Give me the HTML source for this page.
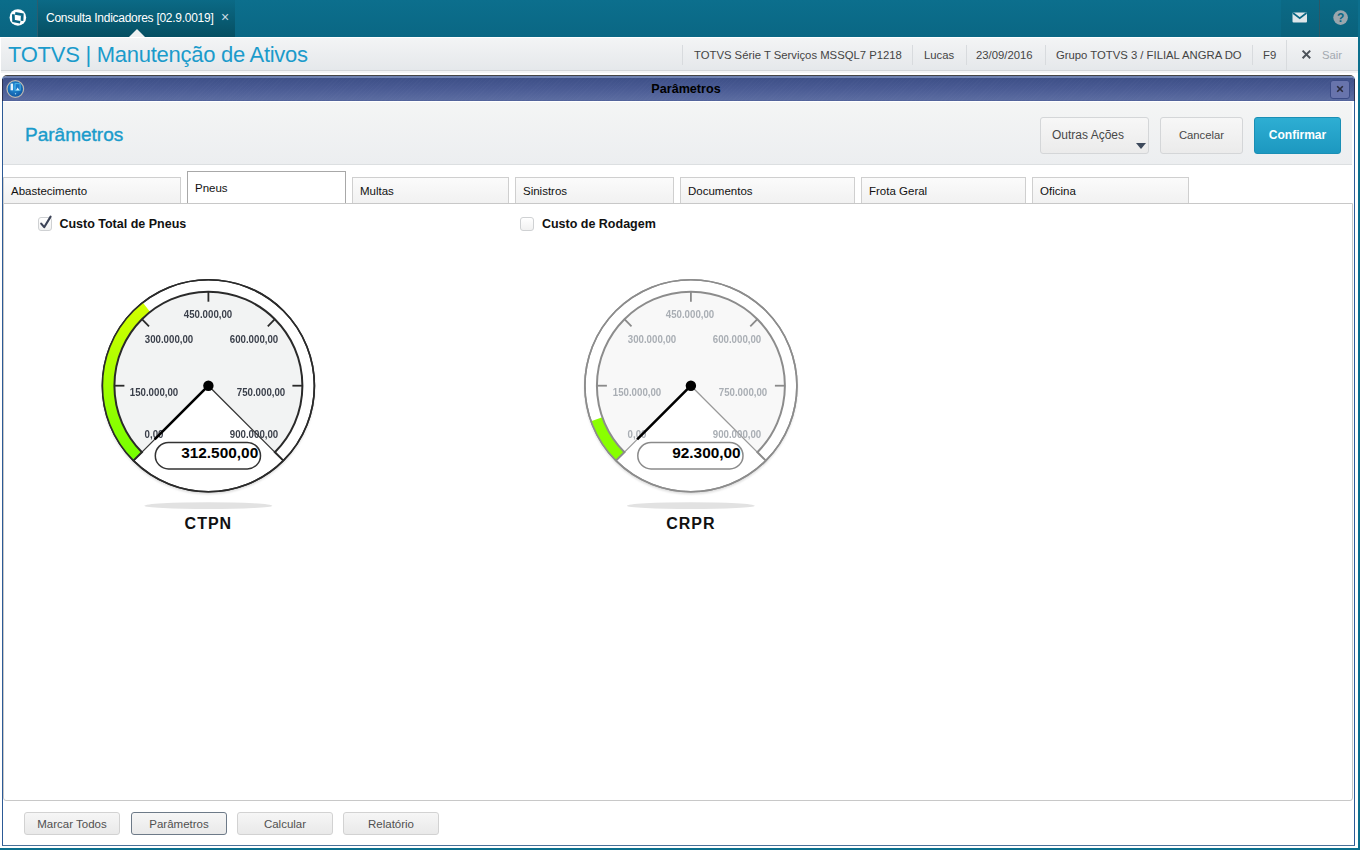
<!DOCTYPE html>
<html><head><meta charset="utf-8">
<style>
*{margin:0;padding:0;box-sizing:border-box}
html,body{width:1360px;height:850px;overflow:hidden;background:#fff;font-family:"Liberation Sans",sans-serif;position:relative}
.a{position:absolute}
#topbar{left:0;top:0;width:1360px;height:37px;background:linear-gradient(#0c6f8d,#0a6784)}
#logo{left:0;top:0;width:38px;height:37px;background:linear-gradient(#0b6d8a,#0a6480);border-right:1px solid #2b5e70}
#tab{left:38px;top:0;width:197px;height:37px;background:linear-gradient(#0b6a86,#064f62)}
#tabtxt{left:46px;top:11px;font-size:12px;letter-spacing:-0.27px;color:#fff;white-space:nowrap}
#tabx{left:221px;top:8.5px;font-size:14px;color:#c9dde3}
#notch{left:129px;top:29px;width:0;height:0;border-left:8px solid transparent;border-right:8px solid transparent;border-bottom:8px solid #eef0f1}
#mail{left:1281px;top:0;width:38px;height:37px;background:linear-gradient(#0b6a86,#0a617b)}
#help{left:1320px;top:0;width:38px;height:37px;background:linear-gradient(#0b6a86,#0a617b)}
#msep{left:1319px;top:0;width:1px;height:37px;background:#2d5866}
#rstrip{left:1358px;top:0;width:2px;height:850px;background:#0c6f8d}
#bstrip{left:0;top:848px;width:1360px;height:2px;background:#0c6f8d}
#hdr{left:1px;top:38px;width:1357px;height:33px;background:linear-gradient(#f3f4f5,#e5e8eb);border-bottom:1px solid #d3d6d9}
#hdrtitle{left:8px;top:42px;font-size:22px;letter-spacing:-0.27px;color:#1b9bcb;white-space:nowrap}
.hi{top:49px;font-size:11.3px;color:#444;white-space:nowrap}
.sep{top:45px;width:1px;height:20px;background:#d8dbde}
#dlg{left:2px;top:75px;width:1353px;height:771px;border:1px solid #2c5a96;border-top:1px solid #444;border-bottom-color:#4a7098;border-radius:5px 5px 0 0;background:#fff}
#title{left:3px;top:76px;width:1351px;height:25px;background:repeating-linear-gradient(135deg,rgba(255,255,255,0) 0 2px,rgba(255,255,255,0.015) 2px 3px),linear-gradient(#6d80b0 0,#6d80b0 1.5px,#3e5088 2.5px,#4b5c95 55%,#5b6ca0 96%,#4a5a95 100%);border-radius:4px 4px 0 0}
#titletxt{left:0;top:81.5px;width:1372px;text-align:center;font-size:12.6px;font-weight:bold;color:#000}
#dhead{left:3px;top:102px;width:1349px;height:63px;background:linear-gradient(#f4f5f5,#eceef0);border-bottom:1px solid #dcdfe1}
#dheadtitle{left:25px;top:124px;font-size:19px;color:#1a9bcb;-webkit-text-stroke:0.4px #1a9bcb}
.btn{height:37px;border:1px solid #d4d6d8;border-radius:3px;background:linear-gradient(#f7f7f7,#ebebeb);font-size:12px;color:#484848;text-align:center;line-height:35px}
#tabs .t{top:177px;height:27px;border:1px solid #cfcfcf;border-bottom:none;background:linear-gradient(#fbfbfb,#f1f1f1);font-size:11.5px;color:#111;padding-left:7px;line-height:27px}
#panel{left:3px;top:203px;width:1350px;height:598px;border:1px solid #c8c8c8;border-radius:0 0 3px 3px;background:#fff}
.bb{top:812px;height:23px;border:1px solid #d2d2d2;border-radius:3px;background:linear-gradient(#f6f6f6,#e9e9e9);font-size:11.5px;color:#505050;text-align:center;line-height:22px}
.gl{width:80px;text-align:center;font-size:11px;font-weight:bold;white-space:nowrap;line-height:12px;transform:scaleX(0.88)}
.vbox{width:106.4px;height:27.7px;border:1.3px solid #333;border-radius:14px;background:#fff}
.vtxt{top:444px;width:103.6px;text-align:right;font-size:15.4px;font-weight:bold;color:#000;line-height:18px}
.glab{top:514px;width:100px;text-align:center;font-size:16px;font-weight:bold;letter-spacing:1px;color:#111;line-height:20px}
.cb{width:14px;height:14px;border:1px solid #cfd1d3;border-radius:3px;background:linear-gradient(#fff,#f1f1f1)}
.cbl{top:217px;font-size:12.5px;font-weight:bold;color:#111;line-height:15px;white-space:nowrap}
</style></head><body>
<div class="a" id="topbar"></div>
<div class="a" id="logo"></div>
<div class="a" id="tab"></div>
<div class="a" id="tabtxt">Consulta Indicadores [02.9.0019]</div>
<div class="a" id="tabx">×</div>
<div class="a" id="notch"></div>
<div class="a" id="mail"></div>
<div class="a" id="help"></div>
<div class="a" id="msep"></div>
<div class="a" id="rstrip"></div>
<div class="a" id="bstrip"></div>

<div class="a" id="hdr"></div>
<div class="a" style="left:1px;top:71px;width:1357px;height:2px;background:#f2f3f4"></div>
<div class="a" id="hdrtitle">TOTVS | Manutenção de Ativos</div>
<div class="a sep" style="left:682px"></div>
<div class="a hi" style="left:694px">TOTVS Série T Serviços MSSQL7 P1218</div>
<div class="a sep" style="left:912px"></div>
<div class="a hi" style="left:924px">Lucas</div>
<div class="a sep" style="left:966px"></div>
<div class="a hi" style="left:976px">23/09/2016</div>
<div class="a sep" style="left:1045px"></div>
<div class="a hi" style="left:1056px">Grupo TOTVS 3 / FILIAL ANGRA DO</div>
<div class="a sep" style="left:1252px"></div>
<div class="a hi" style="left:1263px">F9</div>
<div class="a sep" style="left:1286px;top:40px;height:30px"></div>
<div class="a hi" style="left:1322px;color:#a3a9b0">Sair</div>

<div class="a" id="dlg"></div>
<div class="a" id="title"></div>
<div class="a" id="titletxt">Parâmetros</div>
<div class="a" id="dhead"></div>
<div class="a" id="dheadtitle">Parâmetros</div>
<div class="a btn" style="left:1040px;top:117px;width:109px;padding-right:13px;padding-left:0">Outras Ações</div>
<div class="a btn" style="left:1160px;top:117px;width:83px;font-size:11.3px">Cancelar</div>
<div class="a btn" style="left:1254px;top:117px;width:87px;background:linear-gradient(#2eaed3,#1c98c0);border-color:#1a8fb5;color:#fff;font-weight:bold">Confirmar</div>

<div id="tabs">
<div class="a t" style="left:3px;width:178px">Abastecimento</div>
<div class="a t" style="left:187px;width:159px;top:171px;height:33px;background:#fff;border-color:#a8a8a8;line-height:33px;padding-top:0">Pneus</div>
<div class="a t" style="left:352px;width:157px">Multas</div>
<div class="a t" style="left:515px;width:159px">Sinistros</div>
<div class="a t" style="left:680px;width:175px">Documentos</div>
<div class="a t" style="left:861px;width:165px">Frota Geral</div>
<div class="a t" style="left:1032px;width:157px">Oficina</div>
</div>
<div class="a" id="panel"></div>


<!-- checkboxes -->
<div class="a cb" style="left:38px;top:217px"></div>
<svg class="a" style="left:38px;top:214px" width="16" height="17" viewBox="0 0 16 17"><path d="M3.2,9.6 L6.2,13.2 L12.6,2.6" fill="none" stroke="#3b4256" stroke-width="2.1" stroke-linecap="round" stroke-linejoin="round"/></svg>
<div class="a cbl" style="left:59.4px">Custo Total de Pneus</div>
<div class="a cb" style="left:520px;top:217px"></div>
<div class="a cbl" style="left:541.9px">Custo de Rodagem</div>
<!-- logo -->
<svg class="a" style="left:6px;top:6px" width="24" height="24" viewBox="0 0 24 24"><circle cx="11.86" cy="11.44" r="8.3" fill="#fff"/><path d="M7.3,8.3 L7.6,15.0 L14.2,16.3" fill="none" stroke="#0a6583" stroke-width="2.7"/><path d="M9.2,7.3 L16.3,8.6 L16.0,14.9" fill="none" stroke="#0a6583" stroke-width="2.7"/></svg>
<!-- mail -->
<svg class="a" style="left:1292px;top:11px" width="16" height="13" viewBox="0 0 16 13"><rect x="0.5" y="1.5" width="14.5" height="10" rx="1" fill="#dfe6ea"/><path d="M1,2 L7.75,7.2 L14.5,2" fill="none" stroke="#0a6784" stroke-width="1.6"/></svg>
<!-- help -->
<svg class="a" style="left:1332.5px;top:10px" width="16" height="16" viewBox="0 0 16 16"><circle cx="7.6" cy="7.6" r="7.3" fill="#9aa6ad"/><text x="7.6" y="12.2" text-anchor="middle" font-family="Liberation Sans" font-weight="bold" font-size="12" fill="#0a6784">?</text></svg>
<!-- sair x -->
<svg class="a" style="left:1300px;top:48px" width="13" height="13" viewBox="0 0 13 13"><path d="M2.6,2.6 L10.2,10.2 M10.2,2.6 L2.6,10.2" stroke="#4d535a" stroke-width="2"/></svg>
<!-- dialog icon -->
<svg class="a" style="left:4.9px;top:79px" width="20" height="20" viewBox="0 0 20 20"><defs><radialGradient id="gi" cx="0.45" cy="0.4" r="0.65"><stop offset="0" stop-color="#2a9ae0"/><stop offset="1" stop-color="#0b4f9c"/></radialGradient></defs><circle cx="10.3" cy="10" r="8.3" fill="url(#gi)" stroke="#bdbab2" stroke-width="1.2"/><rect x="5.6" y="4.6" width="2.4" height="6.7" fill="#e6f2fb"/><rect x="10.1" y="4.7" width="5" height="6.6" fill="#1a78c8" stroke="#58c4ee" stroke-width="0.8"/><path d="M11,11.3 L12.6,8.4 L14.4,11.3 Z" fill="#e8f4ff"/><circle cx="10.5" cy="14.8" r="0.7" fill="#9fd4f4"/></svg>
<!-- close btn -->
<div class="a" style="left:1330px;top:80px;width:20px;height:19px;border:1px solid #3b4b86;border-radius:3px;background:#6874ac"></div>
<div class="a" style="left:1354px;top:79px;width:1px;height:22px;background:#2a3050"></div>
<div class="a" style="left:2px;top:79px;width:1px;height:22px;background:#2a3050"></div>
<svg class="a" style="left:1334px;top:83px" width="12" height="12" viewBox="0 0 12 12"><path d="M3.2,3.2 L8.8,8.8 M8.8,3.2 L3.2,8.8" stroke="#2a2a3a" stroke-width="1.6"/></svg>
<!-- dropdown arrow -->
<div class="a" style="left:1136px;top:143px;width:0;height:0;border-left:5.5px solid transparent;border-right:5.5px solid transparent;border-top:6px solid #3e4a5c"></div>
<svg class="a" style="left:0;top:0" width="1360" height="850">
<defs><filter id="bl" x="-10%" y="-10%" width="120%" height="120%"><feGaussianBlur stdDeviation="1"/></filter>
<linearGradient id="g1" gradientUnits="userSpaceOnUse" x1="0" y1="302" x2="0" y2="460"><stop offset="0" stop-color="#d4ff00"/><stop offset="1" stop-color="#74ff00"/></linearGradient>
<linearGradient id="g2" gradientUnits="userSpaceOnUse" x1="0" y1="418" x2="0" y2="460"><stop offset="0" stop-color="#8cff00"/><stop offset="1" stop-color="#86ff00"/></linearGradient>
</defs>
<ellipse cx="208.3" cy="505.7" rx="64" ry="3.4" fill="#e2e2e2"/>
<ellipse cx="690.8" cy="505.7" rx="64" ry="3.4" fill="#e2e2e2"/>
<circle cx="208.4" cy="387.7" r="106.5" fill="#dcdcdc" filter="url(#bl)"/>
<circle cx="208.4" cy="385.7" r="106" fill="#fff" stroke="#2a2a2a" stroke-width="1.6"/>
<path d="M208.4,385.7 L141.93,452.17 A94,94 0 1 1 274.87,452.17 Z" fill="#f2f3f3"/>
<path d="M133.45,460.65 A106,106 0 0 1 142.70,302.51 L150.14,311.93 A94,94 0 0 0 141.93,452.17 Z" fill="url(#g1)"/>
<circle cx="208.4" cy="385.7" r="106" fill="none" stroke="#2a2a2a" stroke-width="1.6"/>
<path d="M141.93,452.17 A94,94 0 1 1 274.87,452.17" fill="none" stroke="#2a2a2a" stroke-width="2"/>
<line x1="208.4" y1="385.7" x2="133.45" y2="460.65" stroke="#333" stroke-width="1.3"/>
<line x1="208.4" y1="385.7" x2="283.35" y2="460.65" stroke="#333" stroke-width="1.3"/>
<line x1="142.64" y1="451.46" x2="133.45" y2="460.65" stroke="#2a2a2a" stroke-width="1.9"/>
<line x1="274.16" y1="451.46" x2="283.35" y2="460.65" stroke="#2a2a2a" stroke-width="1.9"/>
<line x1="114.40" y1="385.70" x2="124.40" y2="385.70" stroke="#2a2a2a" stroke-width="1.8"/>
<line x1="141.93" y1="319.23" x2="149.00" y2="326.30" stroke="#2a2a2a" stroke-width="1.8"/>
<line x1="208.40" y1="291.70" x2="208.40" y2="301.70" stroke="#2a2a2a" stroke-width="1.8"/>
<line x1="274.87" y1="319.23" x2="267.80" y2="326.30" stroke="#2a2a2a" stroke-width="1.8"/>
<line x1="302.40" y1="385.70" x2="292.40" y2="385.70" stroke="#2a2a2a" stroke-width="1.8"/>
<circle cx="690.9" cy="387.7" r="106.5" fill="#dcdcdc" filter="url(#bl)"/>
<circle cx="690.9" cy="385.7" r="106" fill="#fff" stroke="#8c8c8c" stroke-width="1.6"/>
<path d="M690.9,385.7 L624.43,452.17 A94,94 0 1 1 757.37,452.17 Z" fill="#f8f8f8"/>
<path d="M615.95,460.65 A106,106 0 0 1 591.04,421.26 L602.35,417.23 A94,94 0 0 0 624.43,452.17 Z" fill="url(#g2)"/>
<circle cx="690.9" cy="385.7" r="106" fill="none" stroke="#8c8c8c" stroke-width="1.6"/>
<path d="M624.43,452.17 A94,94 0 1 1 757.37,452.17" fill="none" stroke="#8c8c8c" stroke-width="2"/>
<line x1="690.9" y1="385.7" x2="615.95" y2="460.65" stroke="#999" stroke-width="1.3"/>
<line x1="690.9" y1="385.7" x2="765.85" y2="460.65" stroke="#999" stroke-width="1.3"/>
<line x1="625.14" y1="451.46" x2="615.95" y2="460.65" stroke="#8c8c8c" stroke-width="1.9"/>
<line x1="756.66" y1="451.46" x2="765.85" y2="460.65" stroke="#8c8c8c" stroke-width="1.9"/>
<line x1="596.90" y1="385.70" x2="606.90" y2="385.70" stroke="#8a8a8a" stroke-width="1.8"/>
<line x1="624.43" y1="319.23" x2="631.50" y2="326.30" stroke="#8a8a8a" stroke-width="1.8"/>
<line x1="690.90" y1="291.70" x2="690.90" y2="301.70" stroke="#8a8a8a" stroke-width="1.8"/>
<line x1="757.37" y1="319.23" x2="750.30" y2="326.30" stroke="#8a8a8a" stroke-width="1.8"/>
<line x1="784.90" y1="385.70" x2="774.90" y2="385.70" stroke="#8a8a8a" stroke-width="1.8"/>
</svg>
<div class="a gl" style="left:114.4px;top:428.0px;color:#3a3f4a">0,00</div>
<div class="a gl" style="left:114.2px;top:385.7px;color:#3a3f4a">150.000,00</div>
<div class="a gl" style="left:129.0px;top:332.7px;color:#3a3f4a">300.000,00</div>
<div class="a gl" style="left:167.5px;top:308.3px;color:#3a3f4a">450.000,00</div>
<div class="a gl" style="left:214.1px;top:332.7px;color:#3a3f4a">600.000,00</div>
<div class="a gl" style="left:220.5px;top:385.7px;color:#3a3f4a">750.000,00</div>
<div class="a gl" style="left:214.2px;top:428.0px;color:#3a3f4a">900.000,00</div>
<div class="a gl" style="left:596.9px;top:428.0px;color:#a9aeb4">0,00</div>
<div class="a gl" style="left:596.8px;top:385.7px;color:#a9aeb4">150.000,00</div>
<div class="a gl" style="left:611.5px;top:332.7px;color:#a9aeb4">300.000,00</div>
<div class="a gl" style="left:650.0px;top:308.3px;color:#a9aeb4">450.000,00</div>
<div class="a gl" style="left:696.6px;top:332.7px;color:#a9aeb4">600.000,00</div>
<div class="a gl" style="left:703.0px;top:385.7px;color:#a9aeb4">750.000,00</div>
<div class="a gl" style="left:696.8px;top:428.0px;color:#a9aeb4">900.000,00</div>
<svg class="a" style="left:0;top:0" width="1360" height="850"><line x1="208.4" y1="385.7" x2="154.66" y2="439.44" stroke="#000" stroke-width="2.6"/><circle cx="208.4" cy="385.7" r="5.2" fill="#000"/><line x1="690.9" y1="385.7" x2="637.16" y2="439.44" stroke="#000" stroke-width="2.6"/><circle cx="690.9" cy="385.7" r="5.2" fill="#000"/></svg>
<svg class="a" style="left:0;top:0" width="800" height="500"><rect x="155.3" y="442.5" width="105.2" height="26.4" rx="13.2" fill="#fff" stroke="#333" stroke-width="1.5"/><rect x="637.8" y="442.5" width="105.2" height="26.4" rx="13.2" fill="#fff" stroke="#8a8a8a" stroke-width="1.5"/></svg>
<div class="a vtxt" style="left:154.6px">312.500,00</div>

<div class="a vtxt" style="left:637.1px">92.300,00</div>
<div class="a glab" style="left:158.4px">CTPN</div>
<div class="a glab" style="left:640.9px">CRPR</div>

<div class="a bb" style="left:24px;width:96px">Marcar Todos</div>
<div class="a bb" style="left:131px;width:96px;border-color:#6d7a88">Parâmetros</div>
<div class="a bb" style="left:237px;width:96px">Calcular</div>
<div class="a bb" style="left:343px;width:96px">Relatório</div>
</body></html>
